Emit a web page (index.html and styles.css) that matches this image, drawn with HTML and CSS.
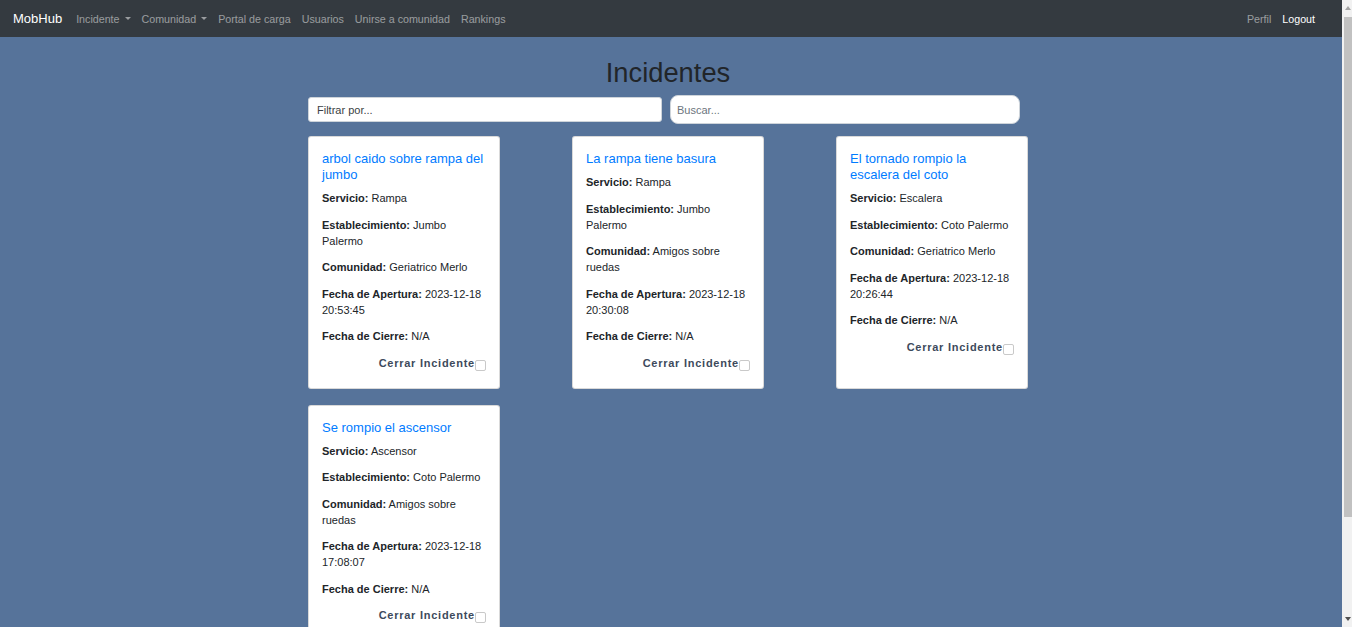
FILE: index.html
```html
<!DOCTYPE html>
<html lang="es">
<head>
<meta charset="utf-8">
<title>Incidentes - MobHub</title>
<link rel="stylesheet" href="styles.css">
</head>
<body>
<div class="page">
<nav class="navbar">
  <a class="brand" href="#">MobHub</a>
  <ul class="nav">
    <li><a class="nav-link dropdown" href="#">Incidente</a></li>
    <li><a class="nav-link dropdown" href="#">Comunidad</a></li>
    <li><a class="nav-link" href="#">Portal de carga</a></li>
    <li><a class="nav-link" href="#">Usuarios</a></li>
    <li><a class="nav-link" href="#">Unirse a comunidad</a></li>
    <li><a class="nav-link" href="#">Rankings</a></li>
  </ul>
  <ul class="nav nav-right">
    <li><a class="nav-link" href="#">Perfil</a></li>
    <li><a class="nav-link active" href="#">Logout</a></li>
  </ul>
</nav>

<div class="content">
<main class="container">
  <h1 class="page-title">Incidentes</h1>
  <div class="filters">
    <input class="input-filter" type="text" placeholder="Filtrar por...">
    <input class="input-search" type="text" placeholder="Buscar...">
  </div>

  <div class="cards">
    <div class="card">
      <a class="card-title" href="#">arbol caido sobre rampa del jumbo</a>
      <p><b>Servicio:</b> Rampa</p>
      <p><b>Establecimiento:</b> Jumbo Palermo</p>
      <p><b>Comunidad:</b> Geriatrico Merlo</p>
      <p><b>Fecha de Apertura:</b> 2023-12-18 20:53:45</p>
      <p><b>Fecha de Cierre:</b> N/A</p>
      <div class="close-row"><span class="close-label">Cerrar Incidente</span><span class="check"></span></div>
    </div>
    <div class="card">
      <a class="card-title" href="#">La rampa tiene basura</a>
      <p><b>Servicio:</b> Rampa</p>
      <p><b>Establecimiento:</b> Jumbo Palermo</p>
      <p><b>Comunidad:</b> Amigos sobre ruedas</p>
      <p><b>Fecha de Apertura:</b> 2023-12-18 20:30:08</p>
      <p><b>Fecha de Cierre:</b> N/A</p>
      <div class="close-row"><span class="close-label">Cerrar Incidente</span><span class="check"></span></div>
    </div>
    <div class="card">
      <a class="card-title" href="#">El tornado rompio la escalera del coto</a>
      <p><b>Servicio:</b> Escalera</p>
      <p><b>Establecimiento:</b> Coto Palermo</p>
      <p><b>Comunidad:</b> Geriatrico Merlo</p>
      <p><b>Fecha de Apertura:</b> 2023-12-18 20:26:44</p>
      <p><b>Fecha de Cierre:</b> N/A</p>
      <div class="close-row"><span class="close-label">Cerrar Incidente</span><span class="check"></span></div>
    </div>
    <div class="card">
      <a class="card-title" href="#">Se rompio el ascensor</a>
      <p><b>Servicio:</b> Ascensor</p>
      <p><b>Establecimiento:</b> Coto Palermo</p>
      <p><b>Comunidad:</b> Amigos sobre ruedas</p>
      <p><b>Fecha de Apertura:</b> 2023-12-18 17:08:07</p>
      <p><b>Fecha de Cierre:</b> N/A</p>
      <div class="close-row"><span class="close-label">Cerrar Incidente</span><span class="check"></span></div>
    </div>
  </div>
</main>
</div>
</div>

<div class="scrollbar">
  <span class="sb-arrow sb-up"></span>
  <span class="sb-thumb"></span>
  <span class="sb-arrow sb-down"></span>
</div>
</body>
</html>
```

FILE: styles.css
```css
* { box-sizing: border-box; }

html, body {
  margin: 0;
  padding: 0;
}

body {
  background: #56739a;
  font-family: "Liberation Sans", Arial, sans-serif;
  font-size: 11px;
  line-height: 16px;
  color: #212529;
}

a { text-decoration: none; }

.page {
  margin-right: 10px;
}

.navbar {
  height: 37px;
  background: #343a40;
  display: flex;
  align-items: center;
  padding: 0 21.5px 0 13px;
}

.brand {
  color: #fff;
  font-size: 13px;
  line-height: 20px;
  margin-right: 8.5px;
}

.nav {
  list-style: none;
  margin: 0;
  padding: 0;
  display: flex;
  align-items: center;
}

.nav-right { margin-left: auto; }

.nav-link {
  display: block;
  padding: 0 5.5px;
  color: rgba(255, 255, 255, 0.5);
  font-size: 10.7px;
  line-height: 16px;
}

.nav-link.active { color: #fff; }

.dropdown::after {
  content: "";
  display: inline-block;
  margin-left: 5px;
  vertical-align: 3px;
  border-top: 3.5px solid rgba(255, 255, 255, 0.5);
  border-left: 3.5px solid transparent;
  border-right: 3.5px solid transparent;
}

.content {
  padding-right: 6px;
}

.container {
  width: 720px;
  margin: 0 auto;
  padding-top: 19px;
  padding-bottom: 82px;
}

.page-title {
  margin: 0;
  text-align: center;
  font-size: 27.3px;
  line-height: 34px;
  font-weight: 400;
  color: #212529;
}

.filters {
  display: flex;
  align-items: center;
  gap: 8px;
  margin-top: 5px;
}

.filters input {
  font-family: "Liberation Sans", Arial, sans-serif;
  font-size: 11px;
  background: #fff;
  outline: none;
}

.input-filter {
  width: 354px;
  height: 25px;
  border: 1px solid #ced4da;
  border-radius: 3px;
  padding: 0 8px;
}

.input-filter::placeholder { color: #3a3f44; }

.input-search {
  width: 350px;
  height: 29px;
  border: 1px solid #ced4da;
  border-radius: 8px;
  padding: 0 6px;
}

.input-search::placeholder { color: #6c757d; }

.cards {
  display: grid;
  grid-template-columns: repeat(3, 192px);
  column-gap: 72px;
  row-gap: 16px;
  margin-top: 12px;
}

.card {
  background: #fff;
  border: 1px solid rgba(0, 0, 0, 0.15);
  border-radius: 3px;
  padding: 14px 13px 13px;
}

.card-title {
  display: block;
  color: #007bff;
  font-size: 13px;
  line-height: 16px;
  margin-bottom: 7px;
}

.card p {
  margin: 0 0 10.5px;
}

.card b { font-weight: 700; }

.close-row {
  text-align: right;
  line-height: 16px;
  height: 20px;
}

.close-label {
  font-weight: 700;
  letter-spacing: 0.75px;
  color: #3d4a5c;
}

.check {
  display: inline-block;
  width: 11px;
  height: 11px;
  border: 1px solid #c9c9c9;
  border-radius: 2px;
  background: #fff;
  vertical-align: -4px;
}

.scrollbar {
  position: fixed;
  top: 0;
  right: 0;
  width: 10px;
  height: 100vh;
  background: #f1f1f1;
}

.sb-thumb {
  position: absolute;
  left: 2px;
  right: 0;
  top: 17px;
  height: 500px;
  background: #c1c1c1;
}

.sb-arrow {
  position: absolute;
  left: 3px;
  width: 0;
  height: 0;
  border-left: 3.5px solid transparent;
  border-right: 3.5px solid transparent;
}

.sb-up {
  top: 6px;
  border-bottom: 4px solid #a3a3a3;
}

.sb-down {
  bottom: 6px;
  border-top: 4px solid #505050;
}
```
